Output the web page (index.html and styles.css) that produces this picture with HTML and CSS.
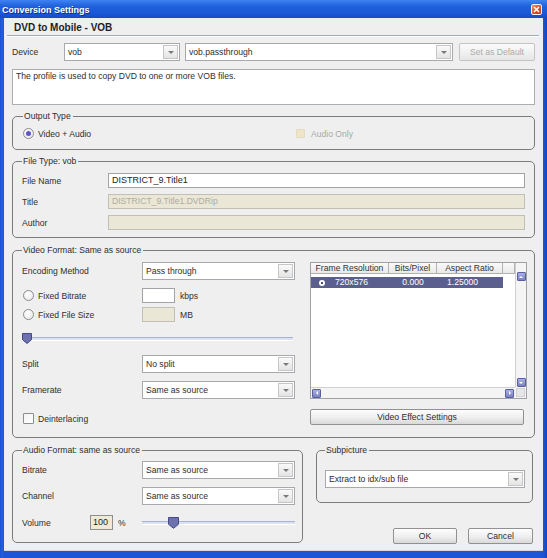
FILE: index.html
```html
<!DOCTYPE html>
<html>
<head>
<meta charset="utf-8">
<title>Conversion Settings</title>
<link rel="stylesheet" href="styles.css">
</head>
<body>
<div class="window">
  <div class="titlebar">
    <span class="title">Conversion Settings</span>
    <span class="close"><svg width="11" height="11" viewBox="0 0 11 11"><path d="M3 3l5 5M8 3l-5 5" stroke="#fff" stroke-width="1.6"/></svg></span>
  </div>
  <div class="client">
    <div class="header">DVD to Mobile - VOB</div>

    <div class="device-row">
      <span class="device-lbl">Device</span>
      <div class="combo c1"><span class="val">vob</span><span class="arrow"></span></div>
      <div class="combo c2"><span class="val">vob.passthrough</span><span class="arrow"></span></div>
      <div class="btn disabled setdef">Set as Default</div>
    </div>

    <div class="desc">The profile is used to copy DVD to one or more VOB files.</div>

    <fieldset class="group output">
      <legend>Output Type</legend>
      <div class="output-row">
        <div class="opt va"><span class="radio checked"></span><span class="opt-text">Video + Audio</span></div>
        <div class="opt"><span class="check dis"></span><span class="opt-text distext">Audio Only</span></div>
      </div>
    </fieldset>

    <fieldset class="group filetype">
      <legend>File Type: vob</legend>
      <div class="frow"><span class="flbl">File Name</span><div class="input">DISTRICT_9.Title1</div></div>
      <div class="frow"><span class="flbl">Title</span><div class="input dis">DISTRICT_9.Title1.DVDRip</div></div>
      <div class="frow"><span class="flbl">Author</span><div class="input dis"></div></div>
    </fieldset>

    <fieldset class="group video">
      <legend>Video Format: Same as source</legend>
      <div class="vgrid">
        <div class="vleft">
          <div class="vrow r-enc"><span class="vlbl">Encoding Method</span><div class="combo wide"><span class="val">Pass through</span><span class="arrow"></span></div></div>
          <div class="vrow r-br"><div class="vlbl opt"><span class="radio"></span><span class="opt-text">Fixed Bitrate</span></div><div class="small-in"></div><span class="unit">kbps</span></div>
          <div class="vrow r-fs"><div class="vlbl opt"><span class="radio"></span><span class="opt-text">Fixed File Size</span></div><div class="small-in dis"></div><span class="unit">MB</span></div>
          <div class="slider vslider"><svg class="thumb" width="10" height="11" viewBox="0 0 10 11"><path d="M0.5 0.5h9v6.2l-4.5 3.8-4.5-3.8z" fill="#6d72ad" stroke="#444a86"/></svg></div>
          <div class="vrow r-split"><span class="vlbl">Split</span><div class="combo wide"><span class="val">No split</span><span class="arrow"></span></div></div>
          <div class="vrow r-fr"><span class="vlbl">Framerate</span><div class="combo wide"><span class="val">Same as source</span><span class="arrow"></span></div></div>
          <div class="vrow r-di"><div class="opt"><span class="check"></span><span class="opt-text">Deinterlacing</span></div></div>
        </div>
        <div class="vright">
          <div class="tbl">
            <div class="tmain">
              <div class="thead">
                <span class="th c-fr">Frame Resolution</span>
                <span class="th c-bp">Bits/Pixel</span>
                <span class="th c-ar">Aspect Ratio</span>
                <span class="th c-x"></span>
              </div>
              <div class="trow">
                <span class="td c-fr"><span class="rowdot"></span><span class="rtext">720x576</span></span>
                <span class="td c-bp">0.000</span>
                <span class="td c-ar">1.25000</span>
              </div>
            </div>
            <div class="vscroll">
              <span class="sbtn up"></span>
              <span class="sbtn down"></span>
            </div>
            <div class="hscroll">
              <span class="sbtn left"></span>
              <span class="sbtn right"></span>
            </div>
            <div class="corner"><span></span></div>
          </div>
          <div class="btn effect">Video Effect Settings</div>
        </div>
      </div>
    </fieldset>

    <div class="bottom">
      <fieldset class="group audio">
        <legend>Audio Format: same as source</legend>
        <div class="vrow a-br"><span class="vlbl">Bitrate</span><div class="combo wide"><span class="val">Same as source</span><span class="arrow"></span></div></div>
        <div class="vrow a-ch"><span class="vlbl">Channel</span><div class="combo wide"><span class="val">Same as source</span><span class="arrow"></span></div></div>
        <div class="vrow a-vol">
          <span class="vol-lbl">Volume</span>
          <div class="vol-in">100</div>
          <span class="pct">%</span>
          <div class="slider aslider"><svg class="thumb" width="11" height="12" viewBox="0 0 11 12"><path d="M0.5 0.5h10v6.8l-5 4-5-4z" fill="#6d72ad" stroke="#444a86"/></svg></div>
        </div>
      </fieldset>
      <div class="bright">
        <fieldset class="group subpic">
          <legend>Subpicture</legend>
          <div class="combo sub"><span class="val">Extract to idx/sub file</span><span class="arrow"></span></div>
        </fieldset>
        <div class="buttons">
          <div class="btn ok">OK</div>
          <div class="btn cancel">Cancel</div>
        </div>
      </div>
    </div>
  </div>
</div>
</body>
</html>
```

FILE: styles.css
```css
* { box-sizing: border-box; }
html, body { margin: 0; padding: 0; }
body {
  width: 547px;
  height: 558px;
  overflow: hidden;
  background: #1d56d6;
  font-family: "Liberation Sans", Arial, sans-serif;
  font-size: 8.6px;
  color: #2e2e2e;
}
.window {
  width: 547px;
  height: 558px;
  display: flex;
  flex-direction: column;
  background: linear-gradient(90deg, #1a50d0, #2360dc 2px, #1d56d6 4px, #1d56d6 543px, #1447c0);
}
.titlebar {
  height: 18px;
  flex: none;
  display: flex;
  align-items: center;
  justify-content: space-between;
  padding: 1px 5px 0 2px;
  background: linear-gradient(#3f83f2, #1f61dd 35%, #1a58d6 75%, #164cc4);
}
.title {
  color: #fff;
  font-weight: bold;
  font-size: 9px;
  text-shadow: 1px 1px 0 #0b2c86;
}
.close {
  width: 11px;
  height: 11px;
  display: flex;
  border: 1px solid #f4f4f4;
  border-radius: 2px;
  background: linear-gradient(135deg, #f08a6c, #d8482a 60%, #c23a1e);
}
.close svg { margin: -1px; }
.client {
  flex: 1;
  margin: 0 4px 7px 4px;
  background: #efefef;
  padding: 0 8px;
  box-shadow: inset 0 -1px 0 #d8d8d8;
}
.header {
  margin: 0 -4px 0 -5px;
  padding: 3px 0 0 7px;
  height: 18px;
  line-height: 14px;
  font-size: 10px;
  font-weight: bold;
  color: #1e1e1e;
  border-bottom: 1px solid #a3abb3;
  box-shadow: 0 1px 0 #fff;
}
.device-row {
  margin-top: 7px;
  height: 18px;
  display: flex;
  align-items: center;
}
.device-lbl { width: 52px; flex: none; }
.combo {
  height: 18px;
  display: flex;
  border: 1px solid #a6a9ad;
  background: #fff;
  flex: none;
}
.combo .val {
  flex: 1;
  line-height: 16px;
  padding-left: 3px;
  white-space: nowrap;
  overflow: hidden;
}
.combo .arrow {
  width: 15px;
  margin: 1px;
  border: 1px solid #c6c6c6;
  background: linear-gradient(#fafafa, #e4e4e4);
  display: flex;
  align-items: center;
  justify-content: center;
}
.combo .arrow::after {
  content: "";
  border-left: 3px solid transparent;
  border-right: 3px solid transparent;
  border-top: 3px solid #7a7a7a;
}
.c1 { width: 116px; }
.c2 { width: 268px; margin-left: 5px; }
.btn {
  border: 1px solid #919191;
  border-radius: 2px;
  background: linear-gradient(#fdfdfd, #eeeeee 55%, #d9d9d9);
  text-align: center;
  color: #2e2e2e;
}
.btn.disabled {
  border-color: #c3c3c3;
  background: linear-gradient(#fbfbfb, #f0f0f0 55%, #e6e6e6);
  color: #ababab;
}
.setdef {
  width: 76px;
  margin-left: 6px;
  height: 18px;
  line-height: 16px;
}
.desc {
  margin-top: 8px;
  height: 36px;
  border: 1px solid #a9aeb3;
  background: #fff;
  padding: 0 3px;
  line-height: 13px;
}
.group {
  margin: 0;
  min-width: 0;
  border: 1px solid #7c7c7c;
  border-radius: 5px;
}
.group legend {
  padding: 0 2px 0 1px;
  line-height: 13px;
  height: 13px;
  color: #2e2e2e;
}
.output {
  margin-top: 5px;
  padding: 4px 9px 9px 10px;
}
.output-row { display: flex; height: 13px; align-items: center; }
.opt { display: flex; align-items: center; }
.opt.va { width: 273px; flex: none; }
.opt-text { margin-left: 4px; }
.distext { color: #a9a9a9; margin-left: 6px; }
.radio {
  width: 11px;
  height: 11px;
  flex: none;
  border-radius: 50%;
  border: 1px solid #8c8c8c;
  background: radial-gradient(circle at 40% 35%, #ffffff, #e6e6e6);
  display: flex;
  align-items: center;
  justify-content: center;
}
.radio.checked::after {
  content: "";
  width: 5px;
  height: 5px;
  border-radius: 50%;
  background: #5b55cf;
}
.check {
  width: 11px;
  height: 11px;
  flex: none;
  border: 1px solid #8c8c8c;
  border-radius: 1px;
  background: linear-gradient(135deg, #f2f2f2, #ffffff);
}
.check.dis {
  width: 9px;
  height: 9px;
  border-color: #e4dcc0;
  background: #efe6c9;
}
.filetype {
  margin-top: 5px;
  padding: 5px 9px 7px 9px;
}
.frow {
  display: flex;
  align-items: center;
  height: 15px;
}
.frow + .frow { margin-top: 6px; }
.flbl { width: 86px; flex: none; }
.input {
  flex: 1;
  height: 15px;
  border: 1px solid #a0a4a8;
  background: #fff;
  padding-left: 3px;
  line-height: 13px;
  color: #1e1e1e;
  font-size: 9px;
}
.input.dis {
  background: #ebe7d7;
  border-color: #c2c0b4;
  color: #aeab9c;
  font-size: 8.6px;
}
.video {
  margin-top: 6px;
  padding: 5px 7px 12px 9px;
}
.vgrid {
  display: grid;
  grid-template-columns: 273px 1fr;
  column-gap: 15px;
}
.vleft { display: flex; flex-direction: column; }
.vrow { display: flex; align-items: center; }
.vlbl { width: 120px; flex: none; }
.vlbl.opt { padding-left: 1px; }
.combo.wide { flex: 1; }
.r-enc { height: 18px; }
.r-br { height: 15px; margin-top: 8px; }
.r-fs { height: 15px; margin-top: 4px; }
.small-in {
  width: 33px;
  height: 15px;
  border: 1px solid #a0a4a8;
  background: #fff;
}
.small-in.dis { background: #ebe7d7; border-color: #c2c0b4; }
.unit { margin-left: 5px; }
.slider {
  height: 11px;
  display: flex;
  align-items: flex-start;
  background: linear-gradient(to bottom, transparent 4px, #a9b2d2 4px, #a9b2d2 5px, #dce1f0 5px, #dce1f0 7px, #ffffff 7px, #ffffff 8px, transparent 8px);
}
.vslider { margin-top: 11px; width: 271px; }
.vslider .thumb { display: block; }
.r-split { height: 18px; margin-top: 11px; }
.r-fr { height: 18px; margin-top: 8px; }
.r-di { height: 11px; margin-top: 14px; padding-left: 1px; }
.vright { display: flex; flex-direction: column; }
.tbl {
  height: 137px;
  border: 1px solid #9ea1a6;
  background: #fff;
  display: grid;
  grid-template-columns: 1fr 11px;
  grid-template-rows: 1fr 11px;
}
.tmain { display: flex; flex-direction: column; overflow: hidden; }
.thead {
  display: flex;
  height: 11px;
  flex: none;
}
.th {
  height: 11px;
  line-height: 10px;
  text-align: center;
  border-right: 1px solid #b1b1b1;
  border-bottom: 1px solid #b1b1b1;
  background: linear-gradient(#fafafa, #e9e9e9);
  color: #333;
  white-space: nowrap;
}
.c-fr { width: 78px; flex: none; }
.c-bp { width: 48px; flex: none; }
.c-ar { width: 66px; flex: none; }
.c-x { flex: 1; }
.trow {
  display: flex;
  margin-top: 3px;
  height: 11px;
  width: 192px;
  background: #5b5f8e;
  color: #fff;
  line-height: 11px;
}
.td { white-space: nowrap; }
.trow .c-fr { display: flex; align-items: center; }
.rowdot {
  width: 6px;
  height: 6px;
  border-radius: 50%;
  margin-left: 8px;
  background: radial-gradient(circle, #4a4e7c 1.2px, #ffffff 1.5px);
}
.rtext { margin-left: 10px; }
.trow .c-bp { text-align: center; }
.trow .c-ar { padding-left: 10px; }
.vscroll {
  background: #f4f4f4;
  border-left: 1px solid #cfcfcf;
  display: flex;
  flex-direction: column;
  align-items: center;
}
.hscroll {
  background: #f4f4f4;
  border-top: 1px solid #cfcfcf;
  display: flex;
  align-items: center;
}
.sbtn {
  width: 9px;
  height: 9px;
  flex: none;
  border: 1px solid #5a609e;
  border-radius: 1px;
  background: linear-gradient(#aab0e2, #7b81c2);
  display: flex;
  align-items: center;
  justify-content: center;
}
.sbtn::after { content: ""; }
.sbtn.up { margin-top: 9px; }
.sbtn.up::after { border-left: 2px solid transparent; border-right: 2px solid transparent; border-bottom: 2px solid #fff; }
.sbtn.down { margin-top: auto; }
.sbtn.down::after { border-left: 2px solid transparent; border-right: 2px solid transparent; border-top: 2px solid #fff; }
.sbtn.left { margin-left: 1px; }
.sbtn.left::after { border-top: 2px solid transparent; border-bottom: 2px solid transparent; border-right: 2px solid #fff; }
.sbtn.right { margin-left: auto; margin-right: 1px; }
.sbtn.right::after { border-top: 2px solid transparent; border-bottom: 2px solid transparent; border-left: 2px solid #fff; }
.corner {
  background: #f4f4f4;
  display: flex;
  align-items: center;
  justify-content: center;
}
.corner span {
  width: 9px;
  height: 9px;
  background: #e6e6e6;
  border: 1px solid #d2d2d2;
}
.effect {
  margin-top: 10px;
  margin-right: 3px;
  height: 16px;
  line-height: 14px;
}
.bottom {
  margin-top: 6px;
  display: grid;
  grid-template-columns: 291px 217px;
  column-gap: 13px;
  align-items: start;
}
.audio { padding: 4px 7px 12px 9px; }
.a-br { height: 18px; }
.a-ch { height: 18px; margin-top: 8px; }
.a-vol { height: 15px; margin-top: 10px; }
.vol-lbl { width: 68px; flex: none; }
.vol-in {
  width: 23px;
  height: 15px;
  flex: none;
  border: 1px solid #8f8f8f;
  background: #efead6;
  line-height: 13px;
  padding-left: 2px;
  color: #1e1e1e;
  font-size: 9px;
}
.pct { width: 29px; flex: none; padding-left: 5px; }
.aslider {
  flex: 1;
  height: 12px;
  background: linear-gradient(to bottom, transparent 4px, #a9b2d2 4px, #a9b2d2 5px, #dce1f0 5px, #dce1f0 7px, #ffffff 7px, #ffffff 8px, transparent 8px);
}
.aslider .thumb { display: block; margin-left: 26px; }
.bright { display: flex; flex-direction: column; }
.subpic { padding: 13px 7px 14px 8px; }
.combo.sub { width: 100%; }
.buttons {
  margin-top: 25px;
  display: flex;
  justify-content: flex-end;
}
.buttons .btn { height: 16px; line-height: 14px; }
.ok { width: 64px; }
.cancel { width: 65px; margin-left: 11px; }
```
